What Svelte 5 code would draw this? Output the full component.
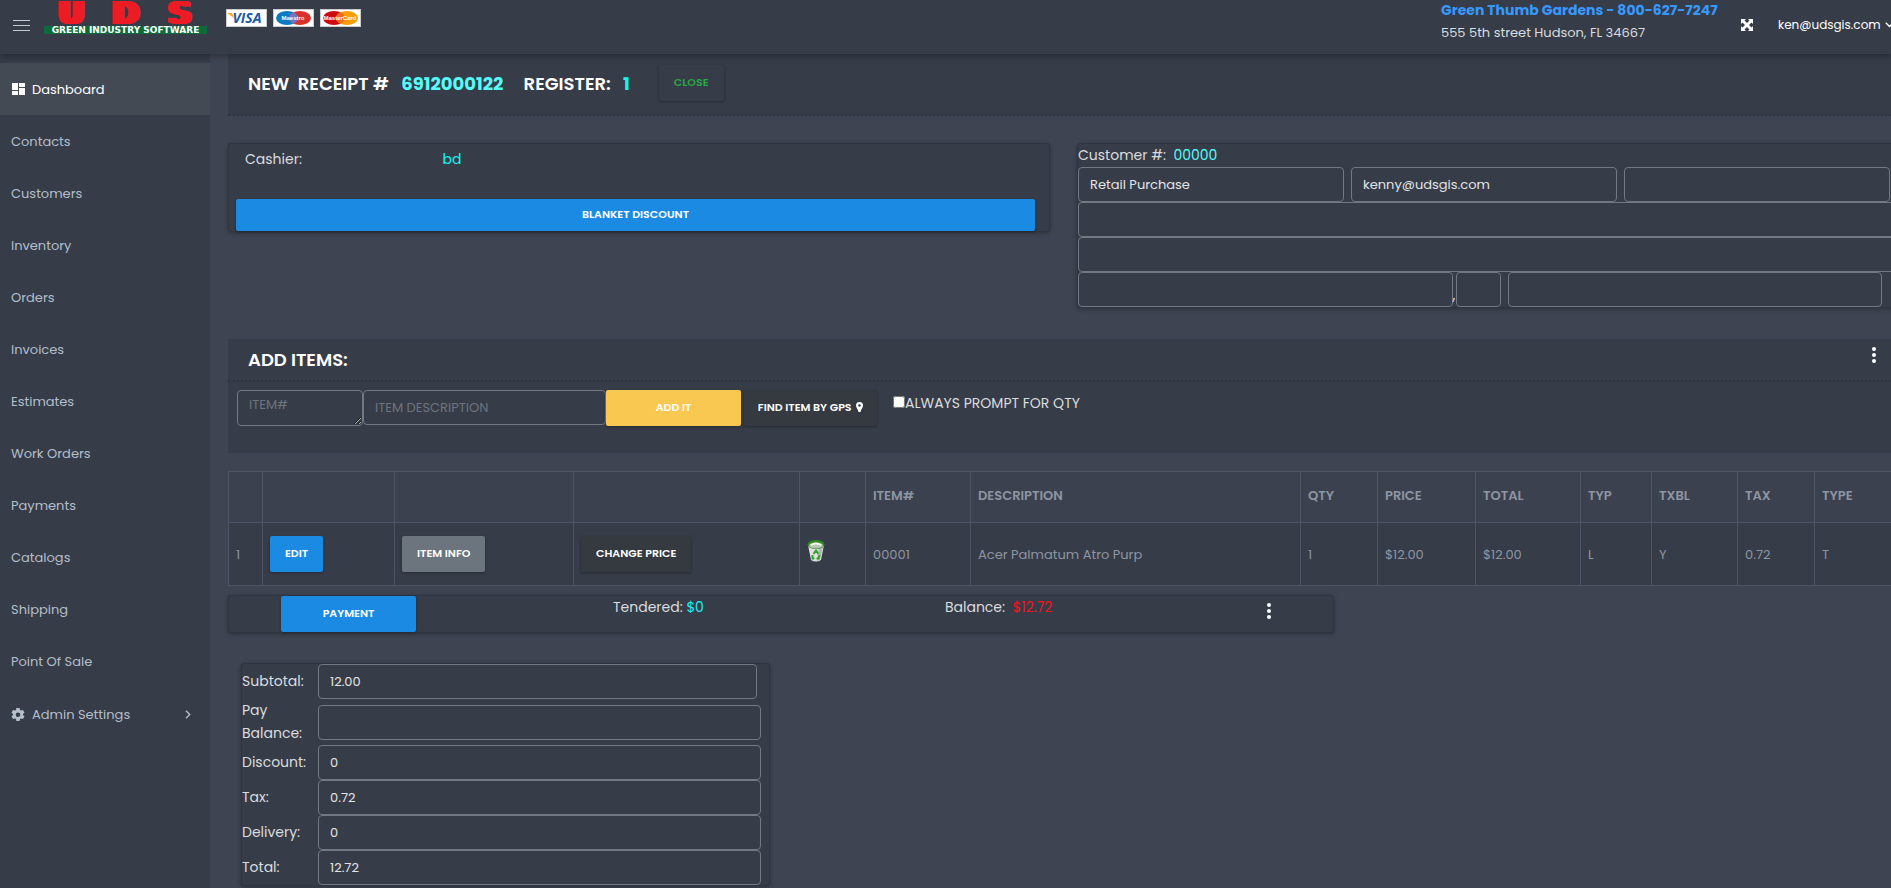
<script lang="ts">
	// Point of sale receipt screen: register header, customer, line items and totals.
	const links = [
		'Contacts',
		'Customers',
		'Inventory',
		'Orders',
		'Invoices',
		'Estimates',
		'Work Orders',
		'Payments',
		'Catalogs',
		'Shipping',
		'Point Of Sale'
	];

	const columns = [
		{ key: 'num', label: '' },
		{ key: 'edit', label: '' },
		{ key: 'info', label: '' },
		{ key: 'change', label: '' },
		{ key: 'del', label: '' },
		{ key: 'item', label: 'ITEM#' },
		{ key: 'desc', label: 'DESCRIPTION' },
		{ key: 'qty', label: 'QTY' },
		{ key: 'price', label: 'PRICE' },
		{ key: 'total', label: 'TOTAL' },
		{ key: 'typ', label: 'TYP' },
		{ key: 'txbl', label: 'TXBL' },
		{ key: 'tax', label: 'TAX' },
		{ key: 'type', label: 'TYPE' }
	];

	const items = [
		['00001', 'Acer Palmatum Atro Purp', '1', '$12.00', '$12.00', 'L', 'Y', '0.72', 'T']
	];

	let totals = $state([
		{ id: 'subtotal', label: 'Subtotal:', value: '12.00' },
		{ id: 'pay-balance', label: 'Pay Balance:', value: '' },
		{ id: 'discount', label: 'Discount:', value: '0' },
		{ id: 'tax', label: 'Tax:', value: '0.72' },
		{ id: 'delivery', label: 'Delivery:', value: '0' },
		{ id: 'total', label: 'Total:', value: '12.72' }
	]);

	let customer = $state({
		name: 'Retail Purchase',
		email: 'kenny@udsgis.com',
		phone: '',
		address1: '',
		address2: '',
		city: '',
		region: '',
		zip: ''
	});

	let itemNumber = $state('');
	let itemDescription = $state('');
	let promptQty = $state(false);
</script>

{#snippet dots()}
	<svg width="4" height="16" viewBox="0 0 4 16" fill="currentColor" aria-hidden="true">
		<circle cx="2" cy="2" r="2" />
		<circle cx="2" cy="8" r="2" />
		<circle cx="2" cy="14" r="2" />
	</svg>
{/snippet}

<div class="app">
	<header class="topbar">
		<button class="bare" aria-label="Toggle menu">
			<svg width="17" height="13" viewBox="0 0 17 13" stroke="#c5c9cf" aria-hidden="true">
				<path d="M0 1.5h17M0 6.5h17M0 11.5h17" />
			</svg>
		</button>
		<div class="logo">
			<div class="logo-mark"><span>U</span><span>D</span><span>S</span></div>
			<div class="logo-strip">GREEN INDUSTRY SOFTWARE</div>
		</div>
		<div class="cards">
			<svg width="41" height="18" viewBox="0 0 41 18">
				<rect x=".5" y=".5" width="40" height="17" fill="#fff" stroke="#ccc" />
				<text class="visa" x="21" y="14">VISA</text>
				<path d="M1 4h5l2 5z" fill="#f7a823" />
			</svg>
			<svg width="41" height="18" viewBox="0 0 41 18">
				<rect x=".5" y=".5" width="40" height="17" fill="#fff" stroke="#ccc" />
				<ellipse cx="14" cy="9" rx="11" ry="7" fill="#0a7bc4" />
				<ellipse cx="27" cy="9" rx="11" ry="7" fill="#d9302c" />
				<path d="M20.500 3.300a11 7 0 0 1 0 11.400a11 7 0 0 1 0-11.400" fill="#7673c0" />
				<text class="brand" x="20" y="11">Maestro</text>
			</svg>
			<svg width="41" height="18" viewBox="0 0 41 18">
				<rect x=".5" y=".5" width="40" height="17" fill="#fff" stroke="#ccc" />
				<ellipse cx="14" cy="9" rx="11" ry="7" fill="#cc0a10" />
				<ellipse cx="27" cy="9" rx="11" ry="7" fill="#fb9d09" />
				<path d="M20.500 3.300a11 7 0 0 1 0 11.400a11 7 0 0 1 0-11.400" fill="#ef6c1a" />
				<text class="brand" x="20" y="11">MasterCard</text>
			</svg>
		</div>
		<div class="company">
			<strong>Green Thumb Gardens - 800-627-7247</strong>
			<span>555 5th street Hudson, FL 34667</span>
		</div>
		<button class="bare expand" aria-label="Full screen">
			<svg width="12" height="12" viewBox="0 0 12 12" aria-hidden="true">
				<path
					d="M0 0h5L3.500 1.500 6 4l2.500-2.500L7 0h5v5l-1.500-1.500L8 6l2.500 2.500L12 7v5H7l1.500-1.500L6 8l-2.500 2.500L5 12H0V7l1.500 1.500L4 6 1.500 3.500 0 5z"
					fill="#fff"
				/>
			</svg>
		</button>
		<button class="bare user">
			ken@udsgis.com
			<svg width="9" height="6" viewBox="0 0 9 6" fill="none" stroke="currentColor" aria-hidden="true">
				<path d="M.8.800 4.500 4.500 8.200.8" stroke-width="1.400" />
			</svg>
		</button>
	</header>

	<nav class="sidebar">
		<a class="active" href="#dashboard">
			<svg width="13" height="12" viewBox="0 0 13 12" fill="currentColor" aria-hidden="true">
				<path d="M0 0h6v7H0zM7 0h6v4H7zM0 8h6v4H0zM7 5h6v7H7z" />
			</svg>
			Dashboard
		</a>
		{#each links as link (link)}
			<a href={`#${link.toLowerCase().replaceAll(' ', '-')}`}>{link}</a>
		{/each}
		<a class="admin" href="#admin-settings">
			<svg width="14" height="14" viewBox="0 0 14 14" fill="currentColor" aria-hidden="true">
				<path
					fill-rule="evenodd"
					d="M5.400 0h3.200l.4 2 1 .6 1.900-.7 1.600 2.700-1.500 1.300v1.200l1.500 1.300-1.600 2.700-1.900-.7-1 .6-.4 2H5.400l-.4-2-1-.6-1.900.7L.5 8.400 2 7.100V5.900L.5 4.600l1.600-2.700 1.900.7 1-.6zM7 4.400a2.300 2.300 0 1 0 0 4.600 2.300 2.300 0 0 0 0-4.600z"
				/>
			</svg>
			Admin Settings
			<svg class="more" width="6" height="9" viewBox="0 0 6 9" fill="none" stroke="currentColor" aria-hidden="true">
				<path d="m1 .8 3.700 3.700L1 8.200" stroke-width="1.400" />
			</svg>
		</a>
	</nav>

	<main>
		<section class="receipt">
			<h1>NEW &nbsp;RECEIPT # <b class="number">6912000122</b> REGISTER: <b class="register">1</b></h1>
			<button class="btn close">CLOSE</button>
		</section>

		<div class="people">
			<section class="card cashier">
				<div class="cashier-line">
					<span>Cashier:</span>
					<span class="cyan">bd</span>
				</div>
				<button class="btn blue">BLANKET DISCOUNT</button>
			</section>

			<section class="card customer">
				<div>Customer #: &nbsp;<span class="number">00000</span></div>
				<div class="thirds">
					<input aria-label="Name" bind:value={customer.name} />
					<input aria-label="Email" bind:value={customer.email} />
					<input aria-label="Phone" bind:value={customer.phone} />
				</div>
				<input aria-label="Address line 1" bind:value={customer.address1} />
				<input aria-label="Address line 2" bind:value={customer.address2} />
				<div class="city">
					<input aria-label="City" bind:value={customer.city} />
					<span>,</span>
					<input class="region" aria-label="State" bind:value={customer.region} />
					<input aria-label="Zip" bind:value={customer.zip} />
				</div>
			</section>
		</div>

		<section class="add">
			<div class="add-head">
				<h2>ADD ITEMS:</h2>
				<button class="bare" aria-label="Item options">{@render dots()}</button>
			</div>
			<div class="add-row">
				<textarea aria-label="Item number" placeholder="ITEM#" rows="1" bind:value={itemNumber}></textarea>
				<input aria-label="Item description" placeholder="ITEM DESCRIPTION" bind:value={itemDescription} />
				<button class="btn yellow">ADD IT</button>
				<button class="btn dark gps">
					FIND ITEM BY GPS
					<svg width="7" height="10" viewBox="0 0 7 10" fill="currentColor" aria-hidden="true">
						<path
							fill-rule="evenodd"
							d="M3.500 0A3.500 3.500 0 0 1 7 3.500C7 5.500 5 7 4.500 10h-2C2 7 0 5.500 0 3.500A3.500 3.500 0 0 1 3.500 0zm0 2.200a1.300 1.300 0 1 0 0 2.600 1.300 1.300 0 0 0 0-2.600z"
						/>
					</svg>
				</button>
				<label class="prompt">
					<input type="checkbox" bind:checked={promptQty} />ALWAYS PROMPT FOR QTY
				</label>
			</div>
		</section>

		<table>
			<thead>
				<tr>
					{#each columns as column (column.key)}
						<th class={column.key}>{column.label}</th>
					{/each}
				</tr>
			</thead>
			<tbody>
				{#each items as cells, i (i)}
					<tr>
						<td>{i + 1}</td>
						<td><button class="btn blue">EDIT</button></td>
						<td><button class="btn gray">ITEM INFO</button></td>
						<td><button class="btn dark">CHANGE PRICE</button></td>
						<td class="trash">
							<button class="bare" aria-label="Delete item">
								<svg width="18" height="22" viewBox="0 0 18 22" aria-hidden="true">
									<path d="M1 5 4 20q5 3 10 0l3-15z" fill="#dfe3df" />
									<path d="M12 7h4l-3 13-3 1z" fill="#b3b8b3" />
									<ellipse cx="9" cy="4.500" rx="8.500" ry="4.500" fill="#2f8a22" />
									<ellipse cx="9" cy="5.500" rx="7" ry="3" fill="#b9c6b6" />
									<path d="M4 5q5-3 10 0" stroke="#f4f6f4" stroke-width="2" fill="none" />
									<path
										d="m6.500 14 2.500-3.500 2.500 3.500M12.500 15l-1 3.500H9.500M7.500 18.500h-2V15"
										stroke="#2fa42a"
										stroke-width="2"
										fill="none"
									/>
								</svg>
							</button>
						</td>
						{#each cells as cell, c (c)}
							<td>{cell}</td>
						{/each}
					</tr>
				{/each}
			</tbody>
		</table>

		<section class="card payment">
			<button class="btn blue">PAYMENT</button>
			<span>Tendered: <span class="cyan">$0</span></span>
			<span>Balance: &nbsp;<span class="red">$12.72</span></span>
			<button class="bare" aria-label="Payment options">{@render dots()}</button>
		</section>

		<section class="card totals">
			{#each totals as row (row.id)}
				<div class="total-row">
					<label for={row.id}>{row.label}</label>
					<input id={row.id} bind:value={row.value} />
				</div>
			{/each}
		</section>
	</main>
</div>

<style>
	:global(body) {
		background: #3e4451;
	}

	.app {
		display: grid;
		grid-template-columns: 210px minmax(0, 1fr);
		grid-template-rows: 54px auto;
		min-height: 100vh;
		overflow: hidden;
		color: #dadcdf;
		font-family: Poppins, Inter, sans-serif;
		font-size: 14px;
		line-height: 23px;
	}

	* {
		box-sizing: border-box;
	}

	button,
	input,
	textarea {
		margin: 0;
		font-family: inherit;
	}

	.bare {
		display: flex;
		align-items: center;
		padding: 0;
		border: 0;
		background: none;
		color: #fff;
		cursor: pointer;
	}

	.topbar {
		grid-column: 1 / -1;
		display: flex;
		align-items: flex-start;
		padding-left: 13px;
		background: #363c48;
		box-shadow: 0 2px 6px rgba(0, 0, 0, 0.3);
		z-index: 1;
	}

	.topbar > .bare {
		height: 50px;
	}

	.logo {
		width: 163px;
		margin: 0 19px 0 14px;
		font-family: 'DejaVu Sans', sans-serif;
		font-weight: bold;
		text-align: center;
		white-space: nowrap;
	}

	/* side shadows fatten the stems into the blocky brand lettering */
	.logo-mark {
		display: grid;
		grid-template-columns: repeat(3, 1fr);
		color: #ed1c24;
		font-size: 32px;
		line-height: 26px;
		text-shadow:
			-3px 0 #ed1c24,
			-2px 0 #ed1c24,
			2px 0 #ed1c24,
			3px 0 #ed1c24;
	}

	.logo-strip {
		background: #0b6b3a;
		color: #fff;
		font-size: 9px;
		line-height: 8px;
	}

	.cards {
		display: flex;
		gap: 6px;
		padding-top: 9px;
	}

	.visa {
		fill: #1a5aa8;
		font: italic bold 14px 'Open Sans', sans-serif;
		text-anchor: middle;
	}

	.brand {
		fill: #fff;
		font: bold 6px 'Liberation Sans', sans-serif;
		text-anchor: middle;
	}

	.company {
		display: flex;
		flex-direction: column;
		width: 300px;
		margin-left: auto;
		font-size: 13px;
		white-space: nowrap;
	}

	.company strong {
		color: #3699ff;
		font-size: 14px;
		line-height: 21px;
	}

	.user {
		gap: 4px;
		width: 113px;
		margin-left: 25px;
		font-size: 12px;
		white-space: nowrap;
	}

	.user svg {
		flex: none;
	}

	.sidebar {
		padding-top: 9px;
		background: #363c48;
	}

	.sidebar a {
		display: flex;
		align-items: center;
		gap: 7px;
		height: 52px;
		padding: 0 19px 0 11px;
		color: #b4bfcb;
		font-size: 13px;
		text-decoration: none;
	}

	.sidebar a.active {
		padding-left: 12px;
		background: #434a54;
		color: #fff;
	}

	.sidebar a.admin {
		height: 55px;
	}

	.more {
		margin-left: auto;
	}

	main {
		padding: 0 0 2px 18px;
	}

	h1,
	h2 {
		margin: 0;
		color: #fff;
		font-size: 18px;
		font-weight: 600;
	}

	.number {
		color: #56fbfb;
	}

	.cyan,
	.register {
		color: #17f3f3;
	}

	.red {
		color: #f5141c;
	}

	.btn {
		height: 36px;
		padding: 0 15px 1px;
		border: 0;
		border-radius: 2px;
		box-shadow: 0 1px 3px rgba(0, 0, 0, 0.3);
		color: #fff;
		font-size: 11px;
		font-weight: 600;
		white-space: nowrap;
		cursor: pointer;
	}

	.blue {
		background: #1b8ae3;
	}

	.gray {
		background: #6c757d;
	}

	.dark {
		background: #343a40;
	}

	.yellow {
		background: #f9c851;
	}

	.close {
		background: #363c48;
		color: #28a745;
	}

	input:not([type='checkbox']),
	textarea {
		display: block;
		width: 100%;
		min-width: 0;
		height: 35px;
		padding: 0 11px;
		border: 1px solid #737882;
		border-radius: 4px;
		background: #363c48;
		color: #e3e4e6;
		font-size: 13px;
	}

	::placeholder {
		color: #6c757d;
		opacity: 1;
	}

	.card {
		border: 1px solid #303641;
		border-radius: 3px;
		background: #363c48;
		box-shadow: 0 1px 4px rgba(0, 0, 0, 0.3);
	}

	.receipt {
		display: flex;
		align-items: center;
		gap: 29px;
		height: 62px;
		padding: 0 20px 2px;
		border-bottom: 2px dotted #2f3540;
		background: #363c48;
	}

	.receipt b {
		margin: 0 16px 0 8px;
		font-weight: 700;
	}

	.receipt b.register {
		margin-right: 0;
	}

	/* the second column runs past the window like the table below it */
	.people {
		display: grid;
		grid-template-columns: 1fr 1fr;
		align-items: start;
		gap: 27px;
		margin: 27px -8px 31px 0;
	}

	.cashier {
		padding: 4px 14px 0 7px;
	}

	.cashier-line {
		display: grid;
		grid-template-columns: 1fr 3fr;
		height: 51px;
		padding-left: 9px;
	}

	.cashier .btn {
		width: 100%;
		height: 32px;
	}

	.thirds {
		display: grid;
		grid-template-columns: repeat(3, 1fr);
		gap: 7px;
		padding-right: 8px;
	}

	.city {
		display: flex;
		align-items: flex-end;
		padding-right: 16px;
	}

	.city span {
		flex: none;
		width: 3px;
	}

	.city input.region {
		flex: none;
		width: 45px;
		margin-right: 7px;
	}

	.add {
		height: 114px;
		margin-bottom: 18px;
		background: #363c48;
	}

	.add-head {
		display: flex;
		align-items: center;
		justify-content: space-between;
		height: 43px;
		padding: 0 15px 0 20px;
		border-bottom: 2px dotted #2f3540;
	}

	.add-head .bare {
		align-self: flex-start;
		height: 32px;
	}

	.add-row {
		display: flex;
		align-items: flex-start;
		padding: 8px 9px;
	}

	.add-row textarea {
		width: 126px;
		height: 36px;
		padding-top: 4px;
		overflow: hidden;
	}

	.add-row input:not([type='checkbox']) {
		width: 243px;
	}

	.add-row .yellow {
		width: 135px;
	}

	.gps {
		width: 133px;
		margin-left: 3px;
		padding: 0 0 1px;
	}

	.gps svg {
		margin-left: 2px;
		vertical-align: -1px;
	}

	.prompt {
		display: flex;
		align-items: flex-start;
		margin-left: 16px;
		line-height: 26px;
	}

	.prompt input {
		width: 12px;
		height: 12px;
		margin-top: 6px;
	}

	table {
		width: calc(100% + 12px);
		border-collapse: collapse;
		table-layout: fixed;
		color: #8e95a2;
		font-size: 13px;
	}

	th,
	td {
		padding: 0 7px;
		border: 1px solid #4c5465;
		text-align: left;
	}

	th {
		height: 51px;
		padding-bottom: 3px;
		background: #3b414e;
		font-weight: 600;
	}

	td {
		height: 63px;
		background: #363c48;
	}

	.trash {
		padding-bottom: 6px;
	}

	.num {
		width: 34px;
	}

	.edit {
		width: 132px;
	}

	.info {
		width: 179px;
	}

	.change {
		width: 226px;
	}

	.del {
		width: 66px;
	}

	.item,
	.total {
		width: 105px;
	}

	.qty,
	.tax {
		width: 77px;
	}

	.price {
		width: 98px;
	}

	.typ {
		width: 71px;
	}

	.txbl {
		width: 86px;
	}

	.type {
		width: 88px;
	}

	.payment {
		display: grid;
		grid-template-columns: 332fr 332fr 322fr 66fr;
		align-items: start;
		width: 66.5%;
		margin-top: 9px;
		padding-left: 52px;
	}

	.payment .btn {
		width: 135px;
	}

	.payment > .bare {
		height: 29px;
	}

	.totals {
		width: 31.8%;
		margin: 30px 0 0 13px;
		padding-right: 8px;
	}

	.total-row {
		display: grid;
		grid-template-columns: 76px 1fr;
		align-items: center;
	}

	.total-row:first-child {
		padding-right: 4px;
	}
</style>
